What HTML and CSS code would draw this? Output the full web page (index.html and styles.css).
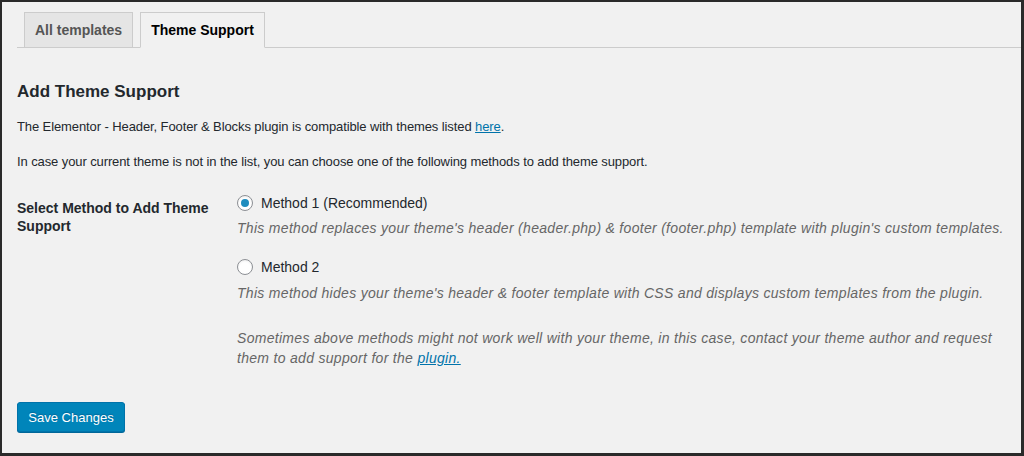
FILE: index.html
```html
<!DOCTYPE html>
<html>
<head>
<meta charset="utf-8">
<link rel="stylesheet" href="styles.css">
</head>
<body>
<div class="frame">
  <nav class="tabs">
    <a class="tab" href="#">All templates</a>
    <a class="tab active" href="#">Theme Support</a>
  </nav>
  <h2 class="title">Add Theme Support</h2>
  <p class="para">The Elementor - Header, Footer &amp; Blocks plugin is compatible with themes listed <a class="link" href="#">here</a>.</p>
  <p class="para para-2">In case your current theme is not in the list, you can choose one of the following methods to add theme support.</p>
  <div class="form-row">
    <div class="form-label">Select Method to Add Theme Support</div>
    <div class="form-options">
      <label class="radio-row"><span class="radio checked"></span>Method 1 (Recommended)</label>
      <p class="desc">This method replaces your theme's header (header.php) &amp; footer (footer.php) template with plugin's custom templates.</p>
      <label class="radio-row radio-row-2"><span class="radio"></span>Method 2</label>
      <p class="desc">This method hides your theme's header &amp; footer template with CSS and displays custom templates from the plugin.</p>
      <p class="desc note">Sometimes above methods might not work well with your theme, in this case, contact your theme author and request them to add support for the <a class="link" href="#">plugin.</a></p>
    </div>
  </div>
  <button class="btn-primary" type="button">Save Changes</button>
</div>
</body>
</html>
```
FILE: styles.css
```css
html, body {
  margin: 0;
  padding: 0;
  background: #f1f1f1;
}
.frame {
  box-sizing: border-box;
  width: 1024px;
  height: 456px;
  border-style: solid;
  border-color: #2a2a2a;
  border-width: 2px 3px 3px 2px;
  background: #f1f1f1;
  padding: 10px 0 0 15px;
  font-family: "Liberation Sans", Arial, sans-serif;
  color: #23282d;
  font-size: 13px;
  overflow: hidden;
}
.tabs {
  display: flex;
  gap: 7px;
  padding-left: 7px;
  border-bottom: 1px solid #ccc;
  height: 35px;
}
.tab {
  display: block;
  box-sizing: border-box;
  height: 36px;
  padding: 5px 10px;
  line-height: 24px;
  font-size: 14px;
  font-weight: 700;
  color: #555;
  text-decoration: none;
  background: #e5e5e5;
  border: 1px solid #ccc;
}
.tab.active {
  background: #f1f1f1;
  color: #000;
  border-bottom-color: #f1f1f1;
}
.title {
  margin: 33px 0 0;
  font-size: 17px;
  line-height: 22px;
  font-weight: 700;
}
.para {
  margin: 14px 0 0;
  line-height: 20px;
  letter-spacing: -0.1px;
}
.para-2 {
  margin-top: 15px;
}
.link {
  color: #0073aa;
  text-decoration: underline;
}
.form-row {
  display: flex;
  margin-top: 21px;
}
.form-label {
  width: 210px;
  flex: none;
  padding-top: 6px;
  font-size: 14px;
  line-height: 18px;
  font-weight: 700;
}
.form-options {
  flex: 1;
  margin-left: 10px;
  padding-right: 12px;
}
.radio-row {
  display: flex;
  align-items: center;
  gap: 8px;
  font-size: 14px;
  line-height: 20px;
}
.radio-row-2 {
  margin-top: 19px;
}
.radio {
  box-sizing: border-box;
  width: 16px;
  height: 16px;
  border-radius: 50%;
  border: 1px solid #8c8f94;
  background: #fff;
  box-shadow: inset 0 1px 2px rgba(0,0,0,0.07);
  display: flex;
  align-items: center;
  justify-content: center;
}
.radio.checked::after {
  content: "";
  width: 8px;
  height: 8px;
  border-radius: 50%;
  background: #1e8cbe;
}
.desc {
  margin: 5px 0 0;
  font-style: italic;
  color: #666;
  font-size: 14px;
  letter-spacing: 0.3px;
  line-height: 20px;
}
.radio-row-2 + .desc {
  margin-top: 6px;
}
.note {
  margin-top: 25px;
}
.btn-primary {
  display: block;
  margin-top: 34px;
  box-sizing: border-box;
  width: 108px;
  height: 30px;
  padding: 0 10px;
  font-family: inherit;
  font-size: 13px;
  color: #fff;
  background: #0085ba;
  border: 1px solid #0073aa;
  border-radius: 3px;
  box-shadow: 0 1px 0 #006799;
  text-shadow: 0 -1px 1px #006799;
}
```
